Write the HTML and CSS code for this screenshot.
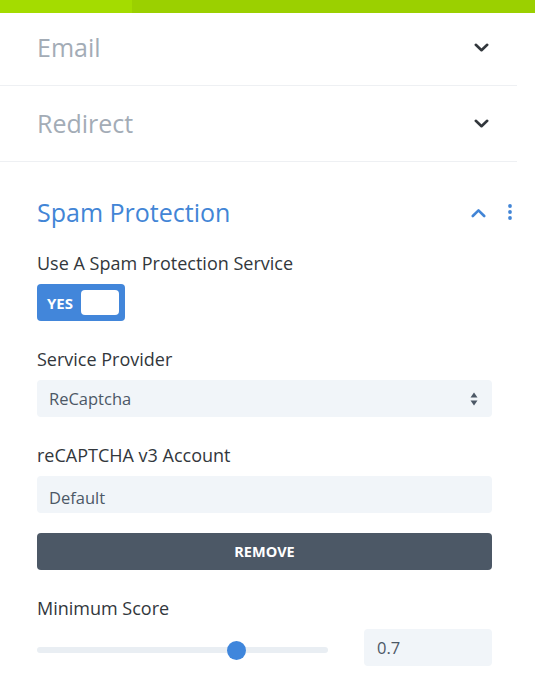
FILE: index.html
```html
<!DOCTYPE html>
<html>
<head>
<meta charset="utf-8">
<link rel="stylesheet" href="styles.css">
</head>
<body>
<div class="topbar"><div class="topbar-left"></div><div class="topbar-right"></div></div>
<div class="panel">
  <div class="toggle-head head-email">
    <span class="head-title">Email</span>
    <svg class="chev" width="15" height="9" viewBox="0 0 15 9"><path d="M1.8 1.8 L7.5 7.2 L13.2 1.8" fill="none" stroke="#32373c" stroke-width="2.6" stroke-linecap="round" stroke-linejoin="round"/></svg>
  </div>
  <div class="toggle-head head-redirect">
    <span class="head-title">Redirect</span>
    <svg class="chev" width="15" height="9" viewBox="0 0 15 9"><path d="M1.8 1.8 L7.5 7.2 L13.2 1.8" fill="none" stroke="#32373c" stroke-width="2.6" stroke-linecap="round" stroke-linejoin="round"/></svg>
  </div>
  <div class="section-open">
    <div class="open-head">
      <span class="head-title active">Spam Protection</span>
      <div class="head-icons">
        <svg class="chev chev-up" width="15" height="10" viewBox="0 0 15 10"><path d="M1.8 8 L7.5 2.4 L13.2 8" fill="none" stroke="#4285d6" stroke-width="2.6" stroke-linecap="round" stroke-linejoin="round"/></svg>
        <svg class="dots" width="6" height="16" viewBox="0 0 6 16"><circle cx="3" cy="2" r="1.9" fill="#4285d6"/><circle cx="3" cy="8" r="1.9" fill="#4285d6"/><circle cx="3" cy="14" r="1.9" fill="#4285d6"/></svg>
      </div>
    </div>
    <div class="field">
      <div class="label">Use A Spam Protection Service</div>
      <div class="switch"><span class="switch-text">YES</span><span class="switch-knob"></span></div>
    </div>
    <div class="field">
      <div class="label">Service Provider</div>
      <div class="select"><span>ReCaptcha</span>
        <svg width="8" height="14" viewBox="0 0 8 14"><path d="M4 0.5 L7.5 5.5 H0.5 Z" fill="#4c5866"/><path d="M4 13.5 L7.5 8.5 H0.5 Z" fill="#4c5866"/></svg>
      </div>
    </div>
    <div class="field">
      <div class="label">reCAPTCHA v3 Account</div>
      <div class="select select-low"><span>Default</span></div>
      <div class="btn">REMOVE</div>
    </div>
    <div class="field">
      <div class="label">Minimum Score</div>
      <div class="range-row">
        <div class="track"><span class="knob"></span></div>
        <div class="num">0.7</div>
      </div>
    </div>
  </div>
</div>
</body>
</html>
```
FILE: styles.css
```css
* { box-sizing: border-box; }
html, body { margin: 0; padding: 0; background: #ffffff; }
body {
  width: 535px;
  height: 675px;
  overflow: hidden;
  font-family: "Open Sans", "Noto Sans", sans-serif;
  color: #32373c;
}
.topbar { display: flex; height: 13px; }
.topbar-left { width: 132px; background: #a4dc00; }
.topbar-right { flex: 1; background: #9bd000; }
.panel { width: 517px; }
.toggle-head {
  display: flex;
  align-items: center;
  justify-content: space-between;
  padding-left: 37px;
  padding-right: 28px;
  border-bottom: 1px solid #eef0f3;
}
.head-email { padding-top: 19px; padding-bottom: 23px; }
.head-redirect { padding-top: 22px; padding-bottom: 23px; }
.head-title {
  font-size: 25px;
  line-height: 30px;
  color: #a3acb6;
}
.head-title.active { color: #4285d6; }
.chev { display: block; }
.chev-up { margin-top: 2px; }
.section-open { padding: 35px 0 0 37px; width: 535px; }
.open-head {
  display: flex;
  align-items: center;
  justify-content: space-between;
  padding-right: 22px;
}
.head-icons { display: flex; align-items: center; gap: 21px; }
.field { width: 455px; margin-top: 24px; }
.field + .field { margin-top: 26px; }
.label {
  font-size: 18px;
  line-height: 24px;
  color: #32373c;
  margin-bottom: 9px;
}
.switch {
  width: 88px;
  height: 37px;
  border-radius: 4px;
  background: #4286da;
  display: flex;
  align-items: center;
  padding: 0 6px 0 10px;
  justify-content: space-between;
}
.switch-text {
  color: #ffffff;
  font-weight: 700;
  font-size: 15px;
  line-height: 16px;
}
.switch-knob {
  width: 38px;
  height: 25px;
  border-radius: 4px;
  background: #ffffff;
}
.select {
  height: 37px;
  background: #f1f5f9;
  border-radius: 4px;
  display: flex;
  align-items: center;
  justify-content: space-between;
  padding: 0 14px 0 12px;
  font-size: 16.5px;
  color: #4c5866;
}
.select-low { padding-top: 5px; }
.select svg { display: block; }
.btn {
  margin-top: 20px;
  height: 37px;
  background: #4c5866;
  border-radius: 4px;
  display: flex;
  align-items: center;
  justify-content: center;
  color: #ffffff;
  font-weight: 700;
  font-size: 14.5px;
}
.range-row {
  display: flex;
  align-items: center;
  justify-content: space-between;
}
.track {
  position: relative;
  width: 291px;
  height: 6px;
  margin-top: 5px;
  border-radius: 3px;
  background: #e9eef3;
}
.knob {
  position: absolute;
  left: 190px;
  top: -6.5px;
  width: 19px;
  height: 19px;
  border-radius: 50%;
  background: #3f86dc;
}
.num {
  width: 128px;
  height: 37px;
  background: #f1f5f9;
  border-radius: 4px;
  display: flex;
  align-items: center;
  padding-left: 13px;
  font-size: 16.5px;
  color: #4c5866;
}
```
